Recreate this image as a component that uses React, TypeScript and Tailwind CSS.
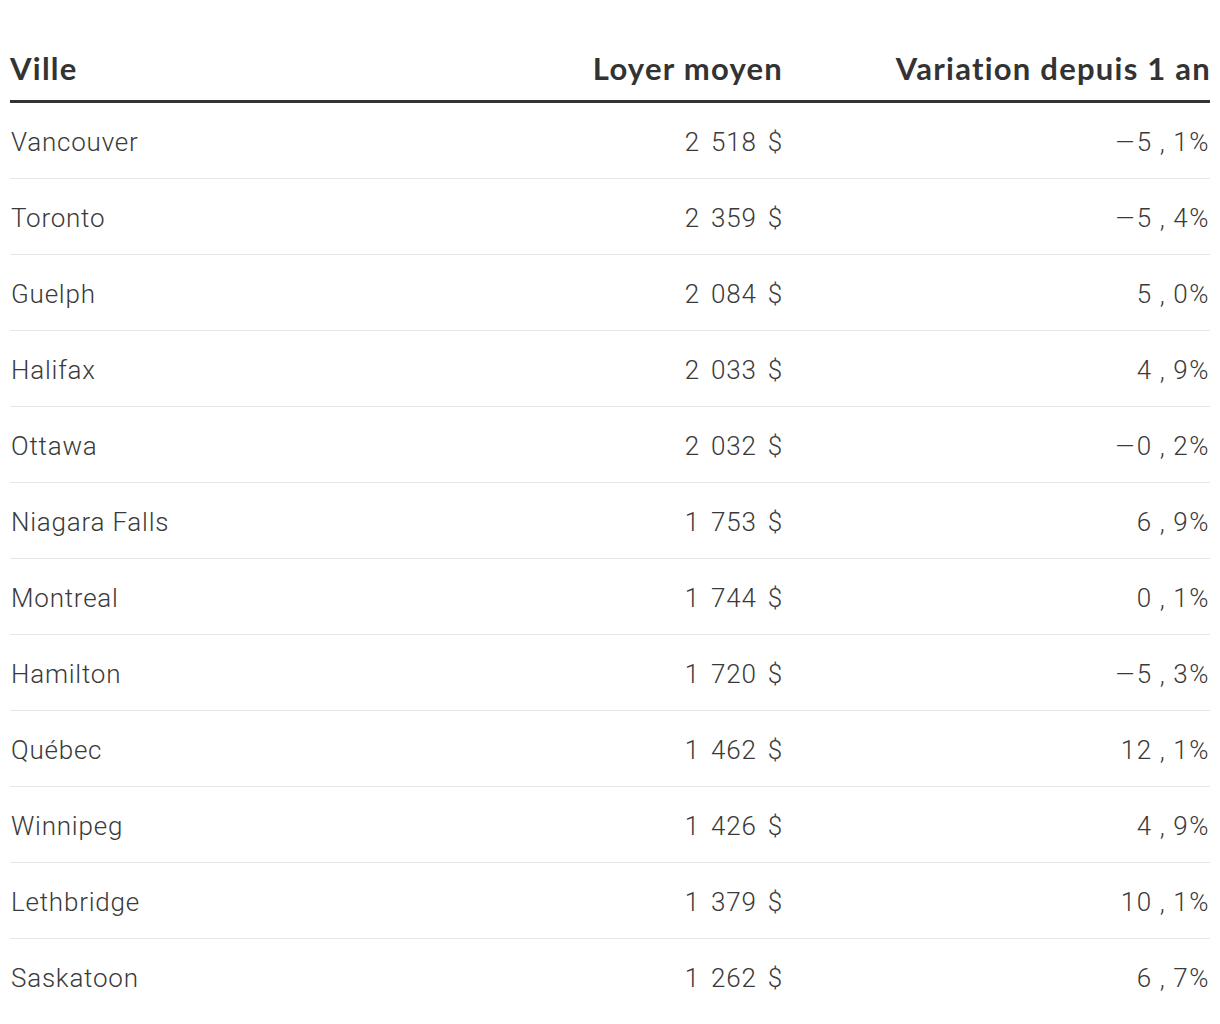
import React from 'react'

const rows: [string, string, string][] = [
  ['Vancouver', '2 518 $', '−5,1%'],
  ['Toronto', '2 359 $', '−5,4%'],
  ['Guelph', '2 084 $', '5,0%'],
  ['Halifax', '2 033 $', '4,9%'],
  ['Ottawa', '2 032 $', '−0,2%'],
  ['Niagara Falls', '1 753 $', '6,9%'],
  ['Montreal', '1 744 $', '0,1%'],
  ['Hamilton', '1 720 $', '−5,3%'],
  ['Québec', '1 462 $', '12,1%'],
  ['Winnipeg', '1 426 $', '4,9%'],
  ['Lethbridge', '1 379 $', '10,1%'],
  ['Saskatoon', '1 262 $', '6,7%'],
]

// the decimal comma sits between two thin gaps in the source table
const Pct: React.FC<{ value: string }> = ({ value }) => {
  const neg = value.startsWith('−')
  const [a, b] = (neg ? value.slice(1) : value).split(',')
  return (
    <span className="tracking-[0.06em]">
      {neg && <span className="inline-block scale-x-150 mr-[2px]">−</span>}
      {a}
      <span className="mx-[7px]">,</span>
      {b}
    </span>
  )
}

const App: React.FC = () => {
  return (
    <div className="bg-white min-h-screen px-[10px] text-[#333333]">
      <div className="grid grid-cols-[1fr_300px_428px] border-b-[3px] border-[#333333] pt-[48px] pb-[12px] font-['Lato','Liberation_Sans',sans-serif] text-[31px] font-bold leading-[40px] tracking-[0.04em]">
        <div>Ville</div>
        <div className="text-right -mr-[1px]">Loyer moyen</div>
        <div className="text-right -mr-[1px]">Variation depuis 1 an</div>
      </div>
      {rows.map(([city, rent, change], i) => (
        <div
          key={city}
          className={
            'grid grid-cols-[1fr_300px_428px] h-[76px] items-center font-[Roboto,"Liberation_Sans",sans-serif] text-[26px] font-light leading-[32px] tracking-[0.03em] pt-[2px] text-[#3a3a3a] ' +
            (i < rows.length - 1 ? 'border-b border-[#e6e6e6]' : '')
          }
        >
          <div className="pl-[1px]">{city}</div>
          <div className="text-right -mr-[1px] [word-spacing:4px]">{rent}</div>
          <div className="text-right">
            <Pct value={change} />
          </div>
        </div>
      ))}
    </div>
  )
}

export default App
